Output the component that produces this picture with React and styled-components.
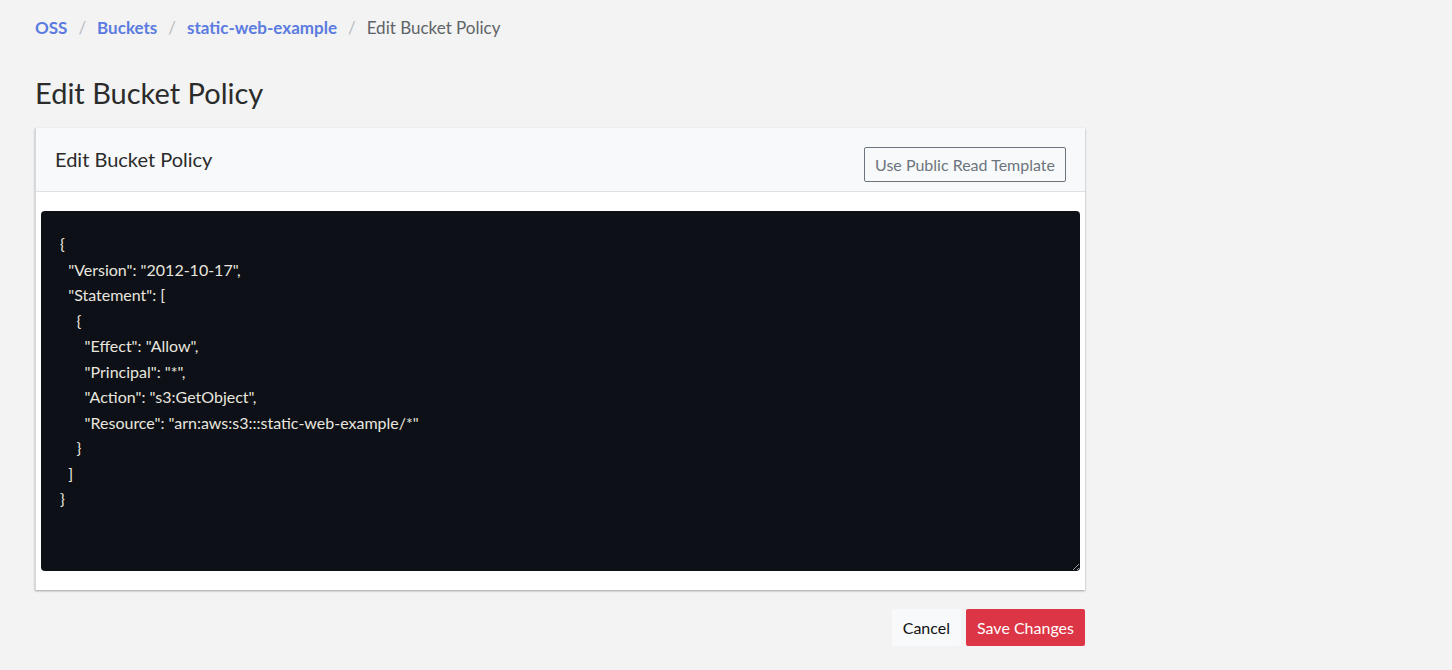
import React from 'react';
import styled, { createGlobalStyle } from 'styled-components';

const GlobalStyle = createGlobalStyle`
  body {
    margin: 0;
    background: #f2f3f2;
    font-family: Lato, "Noto Sans", sans-serif;
    color: #2b2b2b;
  }
`;

const Page = styled.div`
  width: 1050px;
  padding: 16px 0 0 35px;
`;

const Crumbs = styled.nav`
  display: flex;
  align-items: center;
  gap: 11px;
  font-size: 17px;
  height: 22px;
  a {
    color: #5b7be0;
    font-weight: 700;
    text-decoration: none;
  }
  span.sep { color: #b8bcc2; }
  span.cur { color: #5f6368; }
`;

const Title = styled.h1`
  margin: 37px 0 17px;
  font-size: 29px;
  font-weight: 400;
  line-height: 36px;
  color: #2b2b2b;
`;

const Card = styled.div`
  background: #fff;
  border-left: 1px solid #d6d8db;
  box-shadow: 0 1px 2px rgba(0, 0, 0, 0.35);
`;

const CardHeader = styled.div`
  display: flex;
  justify-content: space-between;
  align-items: flex-start;
  background: #f8f9fa;
  border-bottom: 1px solid #dee1e4;
  padding: 19px 19px 8px 19px;
  height: 36px;
  h2 {
    margin: 0;
    font-size: 20px;
    font-weight: 400;
    line-height: 24px;
  }
`;

const OutlineButton = styled.button`
  margin-top: 0;
  background: transparent;
  border: 1px solid #6c757d;
  border-radius: 2px;
  color: #6c757d;
  font: inherit;
  font-size: 16px;
  padding: 7px 10px;
`;

const CardBody = styled.div`
  padding: 19px 5px 19px 5px;
`;

const Editor = styled.textarea`
  display: block;
  box-sizing: border-box;
  width: 100%;
  height: 360px;
  background: #0d1017;
  color: #e8e6df;
  border: none;
  border-radius: 4px;
  padding: 20px 19px;
  font-family: Lato, "Noto Sans", sans-serif;
  font-size: 16px;
  line-height: 25.5px;
  resize: vertical;
  outline: none;
`;

const Actions = styled.div`
  display: flex;
  justify-content: flex-end;
  gap: 5px;
  margin-top: 19px;
`;

const ActionButton = styled.button`
  border: none;
  border-radius: 2px;
  font: inherit;
  font-size: 16px;
  height: 37px;
  padding: 0 11px;
  background: ${p => (p.$primary ? '#dc3545' : '#f8f9fa')};
  color: ${p => (p.$primary ? '#fff' : '#111')};
`;

const policy = `{
  "Version": "2012-10-17",
  "Statement": [
    {
      "Effect": "Allow",
      "Principal": "*",
      "Action": "s3:GetObject",
      "Resource": "arn:aws:s3:::static-web-example/*"
    }
  ]
}`;

export default function App() {
  return (
    <>
      <GlobalStyle />
      <Page>
        <Crumbs>
          <a href="#">OSS</a>
          <span className="sep">/</span>
          <a href="#">Buckets</a>
          <span className="sep">/</span>
          <a href="#">static-web-example</a>
          <span className="sep">/</span>
          <span className="cur">Edit Bucket Policy</span>
        </Crumbs>
        <Title>Edit Bucket Policy</Title>
        <Card>
          <CardHeader>
            <h2>Edit Bucket Policy</h2>
            <OutlineButton>Use Public Read Template</OutlineButton>
          </CardHeader>
          <CardBody>
            <Editor defaultValue={policy} spellCheck={false} />
          </CardBody>
        </Card>
        <Actions>
          <ActionButton>Cancel</ActionButton>
          <ActionButton $primary>Save Changes</ActionButton>
        </Actions>
      </Page>
    </>
  );
}
